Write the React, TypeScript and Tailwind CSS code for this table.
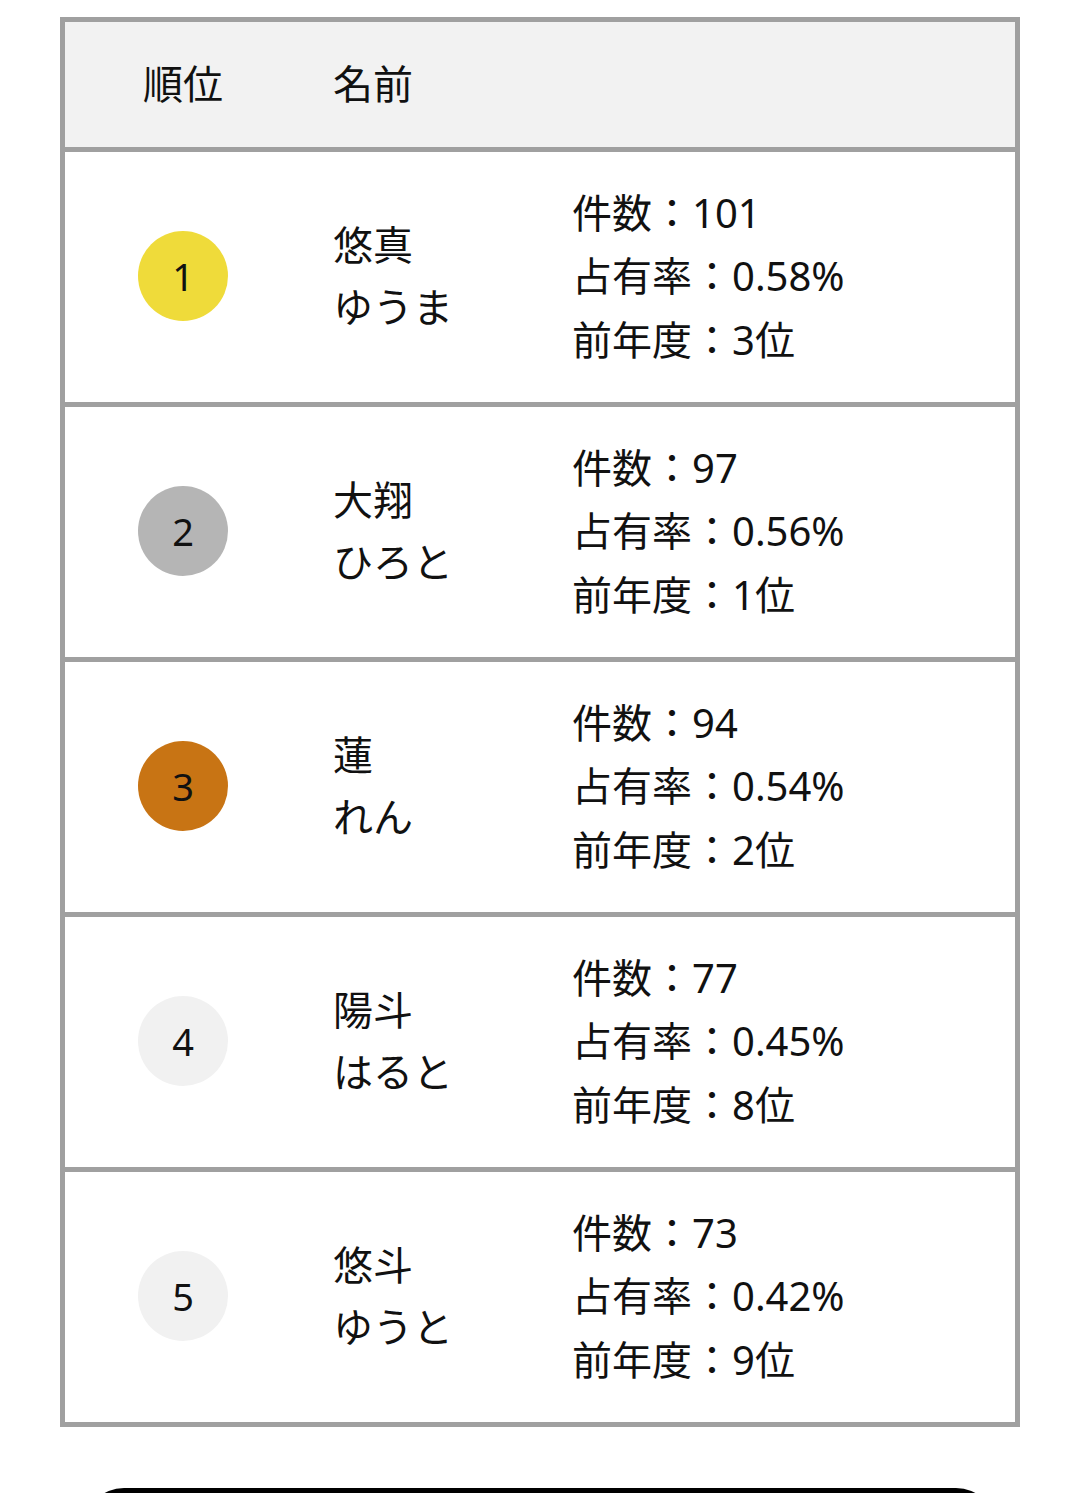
import React from 'react';

interface RankItem {
  rank: number;
  kanji: string;
  kana: string;
  count: string;
  share: string;
  lastYear: string;
  color: string;
}

const rankData: RankItem[] = [
  { rank: 1, kanji: '悠真', kana: 'ゆうま', count: '101', share: '0.58%', lastYear: '3位', color: 'bg-[#efdb3a]' },
  { rank: 2, kanji: '大翔', kana: 'ひろと', count: '97', share: '0.56%', lastYear: '1位', color: 'bg-[#b5b5b5]' },
  { rank: 3, kanji: '蓮', kana: 'れん', count: '94', share: '0.54%', lastYear: '2位', color: 'bg-[#c87414]' },
  { rank: 4, kanji: '陽斗', kana: 'はると', count: '77', share: '0.45%', lastYear: '8位', color: 'bg-[#f1f1f1]' },
  { rank: 5, kanji: '悠斗', kana: 'ゆうと', count: '73', share: '0.42%', lastYear: '9位', color: 'bg-[#f1f1f1]' },
];

const font = { fontFamily: '"Noto Sans", "Noto Sans CJK JP", sans-serif' };

const App = () => {
  return (
    <div className="h-[1493px] bg-white text-[#111] overflow-hidden" style={font}>
      <div className="pt-[17px] px-[60px]">
        <div className="border-[5px] border-[#a0a0a0]">
          {/* header: 125px of content + 5px rule */}
          <div className="h-[130px] pb-[2px] bg-[#f2f2f2] flex items-center border-b-[5px] border-[#a0a0a0] text-[40px]">
            <div className="w-[236px] text-center">順位</div>
            <div className="pl-[32px]">名前</div>
          </div>

          {rankData.map((item, index) => (
            <div
              key={item.rank}
              className={
                'flex items-center pb-[2px] ' +
                (index < rankData.length - 1 ? 'h-[255px] border-b-[5px] border-[#a0a0a0]' : 'h-[250px]')
              }
            >
              <div className="w-[236px] flex justify-center">
                <div className={'w-[90px] h-[90px] rounded-full flex items-center justify-center text-[38px] leading-none ' + item.color}>
                  {item.rank}
                </div>
              </div>
              <div className="w-[271px] pl-[32px] text-[40px] leading-[62px]">
                <div>{item.kanji}</div>
                <div>{item.kana}</div>
              </div>
              <div className="text-[40px] leading-[63.5px]">
                <div>件数：{item.count}</div>
                <div>占有率：{item.share}</div>
                <div>前年度：{item.lastYear}</div>
              </div>
            </div>
          ))}
        </div>
      </div>

      <div className="mt-[61px] mx-[84px] h-[100px] rounded-[40px] bg-black" />
    </div>
  );
};

export default App;
